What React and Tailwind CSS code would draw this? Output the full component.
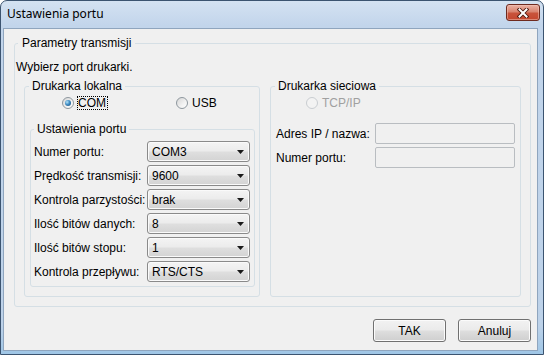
import React from "react";

function Radio({ checked, disabled }) {
  return (
    <span
      className={`w-[12px] h-[12px] rounded-full border flex items-center justify-center shrink-0 ${
        disabled
          ? "border-[#c9cdd1] bg-[#f3f3f3]"
          : "border-[#8e979e] bg-[linear-gradient(135deg,#d6d6d6,#f2f2f2_60%,#ffffff)]"
      }`}
    >
      {checked && (
        <span className="w-[6px] h-[6px] rounded-full bg-[radial-gradient(circle_at_35%_35%,#b4e4f8_0%,#3f8cc4_45%,#16466f_100%)]" />
      )}
    </span>
  );
}

function Combo({ value }) {
  return (
    <div className="w-[103px] h-[21px] rounded-[3px] border border-[#8a8a8a] bg-[linear-gradient(#f4f4f4,#ececec_45%,#dedede_55%,#d3d3d3)] shadow-[inset_0_0_0_1px_#fafafa] flex items-center justify-between pl-[4px] pr-[5px]">
      <span>{value}</span>
      <svg width="7" height="4" viewBox="0 0 7 4">
        <path d="M0 0 H7 L3.5 4 Z" fill="#1a1a1a" />
      </svg>
    </div>
  );
}

function Button({ children }) {
  return (
    <button className="w-[73px] h-[23px] rounded-[3px] border border-[#707070] bg-[linear-gradient(#f2f2f2,#ebebeb_45%,#dddddd_55%,#cfcfcf)] shadow-[inset_0_0_0_1px_#fbfbfb] flex items-center justify-center">
      {children}
    </button>
  );
}

const portRows = [
  ["Numer portu:", "COM3"],
  ["Prędkość transmisji:", "9600"],
  ["Kontrola parzystości:", "brak"],
  ["Ilość bitów danych:", "8"],
  ["Ilość bitów stopu:", "1"],
  ["Kontrola przepływu:", "RTS/CTS"],
];

export default function App() {
  return (
    <div className="w-[544px] h-[355px] flex flex-col rounded-t-[7px] border border-[#3c5470] bg-[linear-gradient(180deg,#d4e2f2_0%,#c2d5eb_7%,#bdd2e9_92%,#9fc6e6_100%)] [font-family:'Liberation_Sans',Arial,sans-serif] text-[12px] leading-[14px] text-black overflow-hidden select-none">
      {/* Title bar */}
      <div className="h-[27px] flex items-start justify-between pl-[6px] pr-[3px]">
        <span className="mt-[5px] leading-[16px] [font-family:'Noto_Sans',sans-serif]">
          Ustawienia portu
        </span>
        <div className="mt-[3px] w-[34px] h-[17px] rounded-[3px] border border-[#6e2a1f] bg-[linear-gradient(#eab2a4,#d98470_45%,#c8533b_55%,#c4472f)] shadow-[inset_0_0_0_1px_#f3c7bb80] flex items-center justify-center">
          <svg width="12" height="10" viewBox="0 0 12 10">
            <path d="M2.5 1.5 L9.5 8.5 M9.5 1.5 L2.5 8.5" stroke="#4d1910" strokeWidth="3.8" strokeLinecap="square" />
            <path d="M2.5 1.5 L9.5 8.5 M9.5 1.5 L2.5 8.5" stroke="#ffffff" strokeWidth="2" strokeLinecap="square" />
          </svg>
        </div>
      </div>

      {/* Client area */}
      <div className="flex-1 ml-[2px] mr-[5px] mb-[3px] border border-[#8fa5be] bg-[#f0f0f0] flex flex-col">
        <fieldset className="ml-[10px] mt-[7px] w-[517px] h-[271px] border border-[#d5dfe5] rounded-[3px]">
          <legend className="ml-[3px] px-[4px]">Parametry transmisji</legend>
          <p className="mt-[10px] pl-[1px]">Wybierz port drukarki.</p>

          <div className="flex mt-[5px] ml-[9px]">
            {/* Drukarka lokalna */}
            <fieldset className="w-[236px] h-[218px] border border-[#d5dfe5] rounded-[3px]">
              <legend className="ml-[4px] px-[3px]">Drukarka lokalna</legend>
              <div className="flex items-center mt-[3px] ml-[37px]">
                <div className="w-[114px] flex items-center gap-[3px]">
                  <Radio checked />
                  <span className="border border-dotted border-black leading-[12px] pr-[1px]">COM</span>
                </div>
                <div className="flex items-center gap-[4px]">
                  <Radio />
                  <span>USB</span>
                </div>
              </div>

              <fieldset className="mt-[12px] ml-[5px] w-[225px] h-[165px] border border-[#d5dfe5] rounded-[3px]">
                <legend className="ml-[3px] px-[3px]">Ustawienia portu</legend>
                <div className="mt-[5px] pl-[3px] flex flex-col gap-[3px]">
                  {portRows.map(([label, value]) => (
                    <div key={label} className="flex items-center h-[21px]">
                      <span className="w-[113px] whitespace-nowrap">{label}</span>
                      <Combo value={value} />
                    </div>
                  ))}
                </div>
              </fieldset>
            </fieldset>

            {/* Drukarka sieciowa */}
            <fieldset className="ml-[10px] w-[251px] h-[218px] border border-[#d5dfe5] rounded-[3px]">
              <legend className="ml-[4px] px-[3px]">Drukarka sieciowa</legend>
              <div className="flex items-center gap-[4px] mt-[3px] ml-[35px]">
                <Radio disabled />
                <span className="text-[#a0a0a0]">TCP/IP</span>
              </div>
              <div className="mt-[13px] pl-[5px] flex flex-col gap-[3px]">
                <div className="flex items-center">
                  <span className="w-[99px] whitespace-nowrap">Adres IP / nazwa:</span>
                  <div className="w-[140px] h-[21px] rounded-[2px] border border-[#b9bdc1] bg-[#f0f0f0]" />
                </div>
                <div className="flex items-center">
                  <span className="w-[99px] whitespace-nowrap">Numer portu:</span>
                  <div className="w-[140px] h-[21px] rounded-[2px] border border-[#b9bdc1] bg-[#f0f0f0]" />
                </div>
              </div>
            </fieldset>
          </div>
        </fieldset>

        <div className="flex justify-end gap-[12px] mt-[12px] pr-[6px]">
          <Button>TAK</Button>
          <Button>Anuluj</Button>
        </div>
      </div>
    </div>
  );
}
